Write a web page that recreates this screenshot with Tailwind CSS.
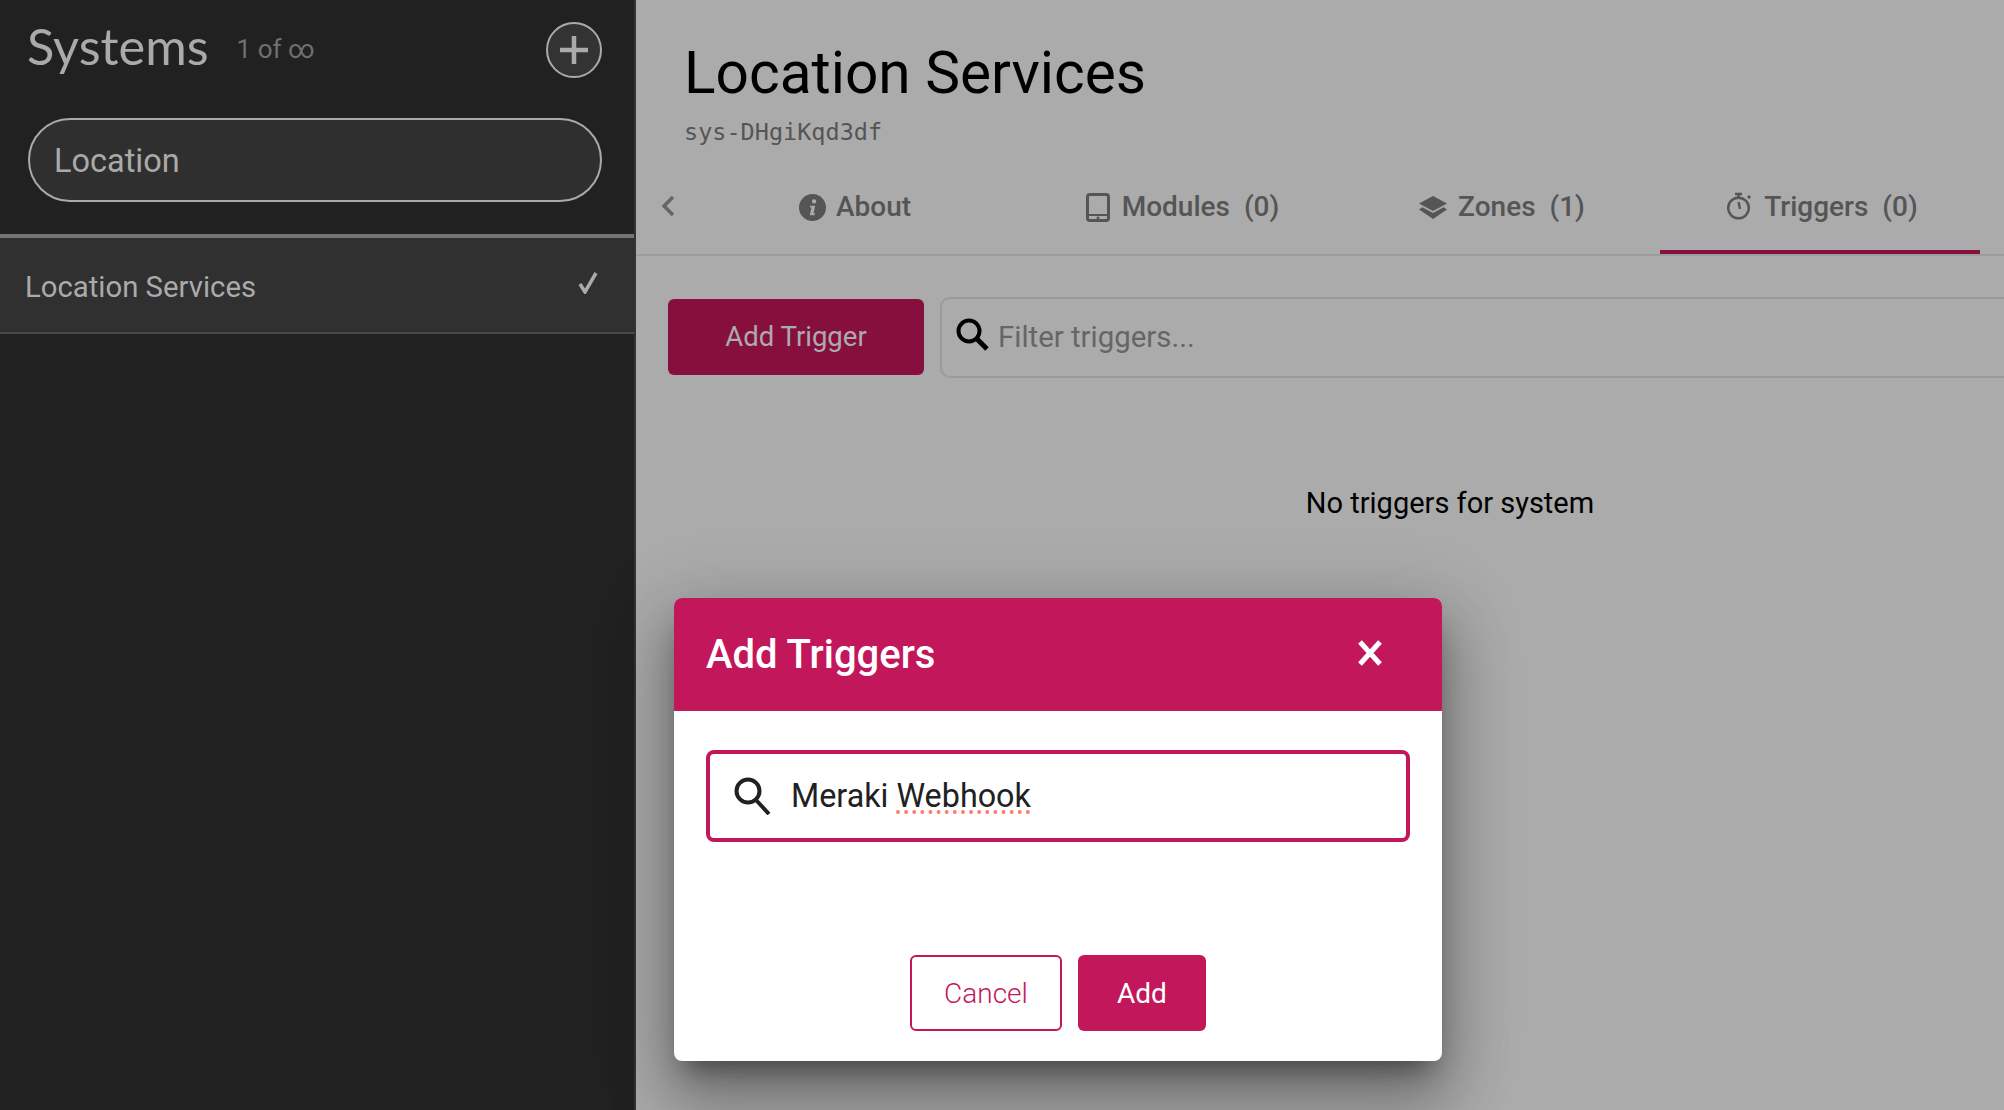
<!DOCTYPE html>
<html lang="en">
<head>
  <meta charset="UTF-8">
  <title>Location Services</title>
  <script src="https://cdn.jsdelivr.net/npm/@tailwindcss/browser@4"></script>
</head>
<body class="relative h-[1110px] w-[2004px] overflow-hidden bg-[#ababab] font-[Roboto,sans-serif]">
  <div class="flex h-full">
    <!-- Sidebar -->
    <aside class="w-[636px] shrink-0 border-r-2 border-[#333] bg-[#212121]">
      <div class="flex h-[118px] items-start pl-[27px] pr-[32px]">
        <h2 class="mt-[18px] text-[50.5px] leading-[56px] text-[#aaaaaa] font-[Lato,sans-serif]">Systems</h2>
        <span class="ml-[28px] mt-[32px] text-[26px] leading-[34px] text-[#707070]">1 of ∞</span>
        <button class="ml-auto mt-[22px] flex h-[56px] w-[56px] items-center justify-center rounded-full border-2 border-[#aaaaaa] bg-[#333333]">
          <svg class="h-[32px] w-[32px]" viewBox="0 0 32 32" fill="none" stroke="#aaaaaa" stroke-width="4.5"><path d="M16 2v28M2 16h28"/></svg>
        </button>
      </div>
      <div class="pl-[28px] pr-[32px]">
        <div class="flex h-[84px] items-center rounded-full border-2 border-[#aaaaaa] bg-[#2f2f2f] pl-[24px] pt-[2px] text-[32.5px] text-[#aaaaaa]">Location</div>
      </div>
      <div class="mt-[32px] flex h-[100px] items-center justify-between border-t-4 border-b-2 border-[#757575] border-b-[#484848] bg-[#303030] pl-[25px] pr-[36px] pt-[5px] text-[29.3px] text-[#aaaaaa]">
        <span>Location Services</span>
        <svg class="mb-[10px] h-[22px] w-[20px]" viewBox="0 0 20 22" fill="none" stroke="#aaaaaa" stroke-width="3.5"><path d="M2 12l5 8L18 1"/></svg>
      </div>
    </aside>

    <!-- Main -->
    <main class="min-w-0 flex-1">
      <div class="pl-[48px] pt-[38px]">
        <h1 class="text-[58.6px] leading-[70px] text-black">Location Services</h1>
        <p class="mt-[9px] font-['DejaVu_Sans_Mono',monospace] text-[23.5px] leading-[30px] text-[#555555]">sys-DHgiKqd3df</p>
      </div>
      <div class="mt-[18px] flex h-[91px] items-stretch border-b-2 border-[#9c9c9c]">
        <div class="flex w-[64px] items-center pb-[8px] pl-[24px]">
          <svg class="h-[22px] w-[16px]" viewBox="0 0 16 22" fill="none" stroke="#666666" stroke-width="3.5"><path d="M13 2L4 11l9 9"/></svg>
        </div>
        <div class="flex w-[310px] items-center justify-center gap-[10px] pb-[5px] text-[28px] font-medium text-[#555555]">
          <svg class="h-[27px] w-[27px]" viewBox="0 0 24 24" fill="#555555"><circle cx="12" cy="12" r="12"/><circle cx="13.4" cy="6.6" r="1.9" fill="#ababab"/><path d="M10 10.4h4.4l-1.5 6.8h1.3l-.4 1.6H9.6l1.5-6.8H9.7z" fill="#ababab"/></svg>
          <span>About</span>
        </div>
        <div class="ml-[10px] flex w-[320px] items-center justify-center gap-[12px] pb-[5px] pl-[5px] text-[28px] font-medium text-[#555555]">
          <svg class="h-[29px] w-[24px]" viewBox="0 0 24 29" fill="none"><rect x="1.5" y="1.5" width="21" height="26" rx="2.5" stroke="#555555" stroke-width="3"/><path d="M2 22h20" stroke="#555555" stroke-width="2"/><circle cx="12" cy="25" r="1.4" fill="#555555"/></svg>
          <span class="whitespace-pre">Modules  (0)</span>
        </div>
        <div class="flex w-[320px] items-center justify-center gap-[11px] pb-[5px] pl-[4px] text-[28px] font-medium text-[#555555]">
          <svg class="h-[23px] w-[28px]" viewBox="0 0 28 23" fill="#555555"><path d="M14 0l14 7.5-14 7.5L0 7.5z"/><path d="M3.4 11.2L14 17l10.6-5.8 3.4 2.2L14 23 0 13.4z"/></svg>
          <span class="whitespace-pre">Zones  (1)</span>
        </div>
        <div class="relative flex w-[320px] items-center justify-center gap-[12px] pb-[5px] pl-[5px] text-[28px] font-medium text-[#555555]">
          <svg class="mb-[2px] h-[28px] w-[25px]" viewBox="0 0 25 28" fill="none" stroke="#555555" stroke-width="2.4"><circle cx="11.5" cy="16" r="10.3"/><path d="M8 2h7M11.5 2v3M11.5 10l1.5 7"/><path d="M21 6l2-2" stroke-width="3"/></svg>
          <span class="whitespace-pre">Triggers  (0)</span>
          <div class="absolute inset-x-0 bottom-0 h-[4px] bg-[#870f3e]"></div>
        </div>
      </div>
      <div class="mt-[41px] flex items-center gap-[16px] pl-[32px]">
        <button class="mb-[2px] h-[76px] w-[256px] rounded-[6px] bg-[#870f3e] text-[27.5px] text-[#ababab]">Add Trigger</button>
        <div class="flex h-[81px] flex-1 items-center gap-[8px] rounded-l-[10px] border-2 border-r-0 border-[#9a9a9a] pl-[14px]">
          <svg class="mb-[6px] h-[34px] w-[34px]" viewBox="0 0 34 34" fill="none" stroke="#000000" stroke-width="4"><circle cx="13" cy="13" r="10.5"/><path d="M20.5 20.5L31 31" stroke-width="5"/></svg>
          <span class="text-[29.4px] text-[#666666]">Filter triggers...</span>
        </div>
      </div>
      <p class="mt-[107px] pl-[260px] text-center text-[29px] leading-[36px] text-black">No triggers for system</p>
    </main>
  </div>

  <!-- Dialog -->
  <div class="absolute left-[674px] top-[598px] flex h-[463px] w-[768px] flex-col rounded-[8px] bg-white shadow-[0_18px_24px_-11px_rgba(0,0,0,0.4),0_38px_61px_5px_rgba(0,0,0,0.26),0_14px_74px_13px_rgba(0,0,0,0.14)]">
    <div class="flex h-[113px] items-center justify-between rounded-t-[8px] bg-[#c2185b] pl-[32px] pr-[59px]">
      <h3 class="text-[40px] font-medium text-white">Add Triggers</h3>
      <svg class="mb-[4px] h-[26px] w-[26px]" viewBox="0 0 26 26" fill="none" stroke="#ffffff" stroke-width="5"><path d="M3 2l20 22M23 2L3 24"/></svg>
    </div>
    <div class="flex-1 px-[32px] pt-[39px]">
      <div class="flex h-[92px] items-center gap-[20px] rounded-[8px] border-4 border-[#c2185b] pl-[24px]">
        <svg class="h-[38px] w-[37px]" viewBox="0 0 37 38" fill="none" stroke="#212121" stroke-width="4"><circle cx="14" cy="14" r="11.5"/><path d="M22 23l13 14"/></svg>
        <span class="text-[32.3px] text-[#212121]">Meraki <span class="underline decoration-dotted decoration-[#ff7b72] decoration-[4px] underline-offset-[4px]">Webhook</span></span>
      </div>
    </div>
    <div class="flex justify-center gap-[16px] pb-[30px]">
      <button class="h-[76px] w-[152px] rounded-[6px] border-2 border-[#c2185b] pt-[2px] text-[28px] font-light text-[#c2185b]">Cancel</button>
      <button class="h-[76px] w-[128px] rounded-[6px] bg-[#c2185b] pt-[2px] text-[28px] text-white">Add</button>
    </div>
  </div>
</body>
</html>
